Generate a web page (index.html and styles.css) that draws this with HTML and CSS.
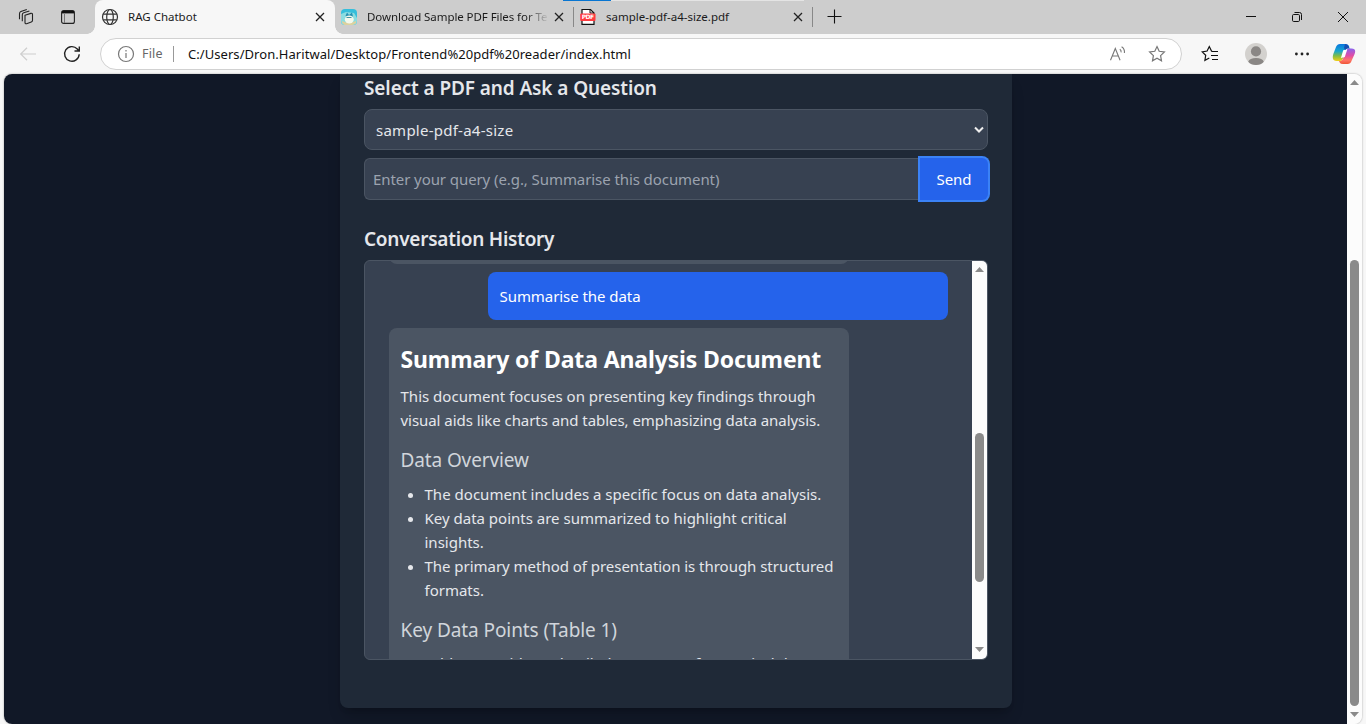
FILE: index.html
```html
<!DOCTYPE html>
<html lang="en">
<head>
<meta charset="utf-8">
<title>RAG Chatbot</title>
<link rel="stylesheet" href="styles.css">
</head>
<body>
<div class="browser">
  <header class="tabs">
    <div class="tab-tools">
      <svg class="workspaces" width="18" height="18" viewBox="0 0 18 18"><path d="M8 7.3 13.8 5.4q1.7-.4 1.7 1.1v5.8q0 1.3-1.2 1.7l-4.7 1.7q-1.6.4-1.6-1.1zM5.3 13.2V6.8q0-1.5 1.4-2L12.4 3M2.5 11.2V5.7q0-1.6 1.4-2.1L9.8 1.6"/></svg>
      <svg class="sidebar-icon" width="16" height="16" viewBox="0 0 16 16"><rect x="1.6" y="1.6" width="12.8" height="12.8" rx="2"/><path class="bar" d="M2 3.2h12"/><path class="rail" d="M4.5 5v9"/></svg>
    </div>
    <div class="tab active">
      <svg class="globe" width="18" height="18" viewBox="0 0 18 18"><circle cx="9" cy="9" r="7.5"/><ellipse cx="9" cy="9" rx="3.3" ry="7.5"/><path d="M2.2 6.2h13.6M2.2 11.8h13.6"/></svg>
      <span class="tab-title t1">RAG Chatbot</span>
      <svg class="x" width="10" height="10" viewBox="0 0 10 10"><path d="m1 1 8 8M9 1 1 9"/></svg>
    </div>
    <div class="tab second">
      <svg width="16" height="16" viewBox="0 0 16 16"><rect width="16" height="16" rx="4" fill="#35bedb"/><path d="M0 5v7q0 4 4 4h8q4 0 4-4V9l-3-5-8-1z" fill="#8bdce0"/><path d="M1 12q7 3 14 0v2q-2 2-4 2H4q-3-1-3-4z" fill="#ddd19e"/><path d="M4.5 7 6 3.5 8 6l3-2.5 1 4z" fill="#2690b3"/><ellipse cx="8.3" cy="10.5" rx="4.5" ry="4" fill="#f4f8ec"/><path d="M5.5 8.5h5" stroke="#4894a3"/></svg>
      <span class="tab-title t2">Download Sample PDF Files for Te</span>
      <svg class="x" width="10" height="10" viewBox="0 0 10 10"><path d="m1 1 8 8M9 1 1 9"/></svg>
    </div>
    <div class="tab third">
      <svg width="16" height="18" viewBox="0 0 16 18"><path d="M2 1.5h8.5L14 5v11.3H2z" fill="#fff" stroke="#111" stroke-width="1.2"/><path d="M10 1.5V5h4" fill="none" stroke="#111"/><rect x=".2" y="5.5" width="15.3" height="7.5" rx="1" fill="#ff3b3f"/><text x="1.8" y="11.4" class="pdf-label" textLength="12.2">PDF</text></svg>
      <span class="tab-title t3">sample-pdf-a4-size.pdf</span>
      <svg class="x" width="10" height="10" viewBox="0 0 10 10"><path d="m1 1 8 8M9 1 1 9"/></svg>
    </div>
    <svg class="plus" width="16" height="16" viewBox="0 0 16 16"><path d="M7.5 1.5v14M.5 8.5h14"/></svg>
    <div class="window-controls">
      <svg width="12" height="12" viewBox="0 0 12 12"><path d="M1 5.5h10"/></svg>
      <svg width="12" height="12" viewBox="0 0 12 12"><rect x="1.5" y="3.5" width="7" height="7" rx="1.2"/><path d="M3.5 1.5H8.5q2 0 2 2V9"/></svg>
      <svg width="12" height="12" viewBox="0 0 12 12"><path d="m1 1 10 10M11 1 1 11"/></svg>
    </div>
  </header>
  <nav class="toolbar">
    <svg class="back" width="18" height="16" viewBox="0 0 18 16"><path d="M17 8H2M8 1.8 1.7 8 8 14.2"/></svg>
    <svg class="reload" width="18" height="18" viewBox="0 0 18 18"><path d="M16.2 9.2A7.3 7.3 0 1 1 14.3 4L16 6M16.3 1.4V6h-4.8"/></svg>
    <div class="address">
      <svg class="info" width="18" height="18" viewBox="0 0 18 18"><circle cx="9" cy="9" r="7.5"/><path d="M9 8v5M9 5v1.4"/></svg>
      <span class="file">File</span>
      <span class="url">C:/Users/Dron.Haritwal/Desktop/Frontend%20pdf%20reader/index.html</span>
      <svg class="aloud" width="18" height="18" viewBox="0 0 18 18"><path d="m1.5 15.2 4.8-11.7 4.8 11.7M3.2 11h6.2M10.8 4.2q1.6 1 1.3 3.2M12.6 1.8q3.4 2.2 2.8 6.2"/></svg>
      <svg class="star" width="18" height="18" viewBox="0 0 18 18"><path d="m9 1.6 2.2 4.7 5.2.7-3.8 3.6.9 5.2L9 13.3l-4.5 2.5.9-5.2L1.6 7l5.2-.7z"/></svg>
    </div>
    <svg class="favorites" width="19" height="18" viewBox="0 0 19 18"><path d="M11.2 6.4 10.5 6 8.3 1.5 6.1 6l-4.9.8 3.5 3.5-.8 5 4.4-2.3M11 6.5h6M10 10.5h7M11 14.5h6"/></svg>
    <svg class="avatar" width="22" height="22" viewBox="0 0 22 22"><circle cx="11" cy="11" r="11" fill="#d3d1ce"/><circle cx="11" cy="8.4" r="5.1" fill="#8a8785"/><path d="M3.2 18.7q1.5-3.7 7.8-3.7t7.8 3.7Q16 22 11 22t-7.8-3.3" fill="#8a8785"/></svg>
    <svg class="dots" width="16" height="4" viewBox="0 0 16 4"><circle cx="2.4" cy="2" r="1.4"/><circle cx="8" cy="2" r="1.4"/><circle cx="13.6" cy="2" r="1.4"/></svg>
    <svg class="copilot" width="24" height="22" viewBox="0 0 24 22">
      <defs><linearGradient id="cool" x1="0" y1="0" x2="0" y2="1"><stop stop-color="#0876df"/><stop offset=".42" stop-color="#18a7cf"/><stop offset=".7" stop-color="#83bd45"/><stop offset="1" stop-color="#f2cf17"/></linearGradient><linearGradient id="warm" x1="0" y1="0" x2="0" y2="1"><stop stop-color="#8a63ee"/><stop offset=".45" stop-color="#df4da7"/><stop offset=".75" stop-color="#ff766a"/><stop offset="1" stop-color="#ef5535"/></linearGradient></defs>
      <path d="M13 1H8Q5.2 1 4 4L1.3 11q-2 7 3.4 7H8q2.2 0 3-2.5l3-9Q15 4 17.3 4L16.8 2.8Q16 1 13 1z" fill="url(#cool)"/><path d="M11 21h4.5q3 0 4-3L22.6 11q2-5.5-3.1-5.5h-2.6q-2.5 0-3.2 2.5l-2.5 7.2Q10.5 18 7 18l.7 1.5Q8.4 21 11 21z" fill="url(#warm)"/><path d="m11.2 7.2 4.1-1-2.5 7.8-3.9 1z" fill="#fff"/><path d="M13 1q3 0 4 3 .4 1.5 1.5 1.5H16q-2 0-3 1.5l-1-2z" fill="#164fb3"/>
    </svg>
  </nav>
  <div class="viewport">
    <main class="page">
      <section class="card">
        <h2 class="select-title">Select a PDF and Ask a Question</h2>
        <div class="select"><span>sample-pdf-a4-size</span><svg width="12" height="8" viewBox="0 0 12 8"><path d="m2 1.5 4 4 4-4"/></svg></div>
        <div class="query-row">
          <div class="query"><span>Enter your query (e.g., Summarise this document)</span></div>
          <button class="send"><span>Send</span></button>
        </div>
        <h2 class="history-title">Conversation History</h2>
        <div class="history">
          <div class="messages">
            <div class="previous"></div>
            <div class="message user"><span>Summarise the data</span></div>
            <article class="message reply">
              <h1>Summary of Data Analysis Document</h1>
              <p><span class="p1">This document focuses on presenting key findings through</span><br><span class="p2">visual aids like charts and tables, emphasizing data analysis.</span></p>
              <h3 class="overview">Data Overview</h3>
              <ul>
                <li><span class="l1">The document includes a specific focus on data analysis.</span></li>
                <li><span class="l2">Key data points are summarized to highlight critical</span><br><span class="l3">insights.</span></li>
                <li><span class="l4">The primary method of presentation is through structured</span><br><span class="l3">formats.</span></li>
              </ul>
              <h3 class="points">Key Data Points (Table 1)</h3>
              <ul class="clipped"><li><span class="l5">Table 1 provides a detailed summary of numerical data</span></li></ul>
            </article>
          </div>
          <div class="scrollbar inner"><svg width="9" height="6" viewBox="0 0 9 6"><path d="M4.5 0 9 5H0z"/></svg><i></i><svg width="9" height="6" viewBox="0 0 9 6"><path d="M0 0h9L4.5 5z"/></svg></div>
        </div>
      </section>
    </main>
    <div class="scrollbar outer"><svg width="9" height="6" viewBox="0 0 9 6"><path d="M4.5 0 9 5H0z"/></svg><i></i><svg width="9" height="6" viewBox="0 0 9 6"><path d="M0 0h9L4.5 5z"/></svg></div>
  </div>
</div>
</body>
</html>
```
FILE: styles.css
```css
* { box-sizing: border-box; }
body { margin: 0; overflow: hidden; font-family: "Noto Sans", sans-serif; font-size: 15px; line-height: 24px; }
h1, h2, h3, p, ul { margin: 0; }
svg { display: block; flex: none; fill: none; stroke: none; }
span { white-space: nowrap; }
.browser { width: 1366px; height: 724px; display: flex; flex-direction: column; background: #f7f7f7; overflow: hidden; }
.tabs { height: 34px; display: flex; flex: none; background: #cdcdcd; font-size: 11.5px; }
.tab-tools { width: 95px; padding: 0 0 0 17px; display: flex; align-items: center; gap: 25px; background: #cdcdcd; }
.workspaces, .sidebar-icon { stroke: #222; stroke-width: 1.1; }
.sidebar-icon .bar { stroke: #111; stroke-width: 2.4; }
.sidebar-icon .rail { stroke: #777; stroke-width: 1; }
.tab { display: flex; align-items: center; }
.active { position: relative; width: 240px; padding: 0 10px 0 6px; background: #f7f7f7; border-radius: 8px 8px 0 0; }
.active::before, .active::after { content: ""; position: absolute; bottom: 0; width: 8px; height: 8px; }
.active::before { left: -8px; background: radial-gradient(circle at 0 0, #cdcdcd 7.5px, #f7f7f7 8px); }
.active::after { right: -8px; background: radial-gradient(circle at 100% 0, #cdcdcd 7.5px, #f7f7f7 8px); }
.globe { stroke: #333; stroke-width: 1.2; }
.tab-title { color: #1b1b1b; line-height: 18px; }
.t1 { margin-left: 9px; }
.t2 { margin-left: 10px; width: 184px; letter-spacing: -.07px; overflow: hidden; -webkit-mask-image: linear-gradient(90deg, #000 158px, transparent 182px); mask-image: linear-gradient(90deg, #000 158px, transparent 182px); }
.t3 { margin-left: 10px; }
.x { margin-left: auto; stroke: #222; stroke-width: 1.3; }
.second { width: 238px; padding: 0 9px 0 6px; background: linear-gradient(#0875d1,#0875d1) 100% 0/10px 1px no-repeat; }
.third { width: 240px; padding: 0 10px 0 7px; background: linear-gradient(#0875d1,#0875d1) 0 0/38px 1px no-repeat, linear-gradient(#e4e4e4,#e4e4e4) 38px 0/193px 1px no-repeat, linear-gradient(#888,#888) 0 7px/1px 20px no-repeat, linear-gradient(#888,#888) 239px 7px/1px 20px no-repeat; }
.pdf-label { font: bold 6px "DejaVu Sans", sans-serif; fill: #fff; }
.plus { margin: 8px 0 0 14px; stroke: #111; stroke-width: 1.1; }
.window-controls { margin-left: auto; display: flex; align-items: center; gap: 34px; padding-right: 17px; stroke: #111; stroke-width: 1; }
.toolbar { height: 40px; flex: none; display: flex; align-items: center; padding: 0 10px 0 19px; }
.window-controls svg { stroke: #111; }
.back { stroke: #cecece; stroke-width: 1.2; }
.reload { margin-left: 26px; stroke: #222; stroke-width: 1.4; }
.address { margin-left: 19px; width: 1082px; flex: none; height: 32px; border: 1px solid #d1d1d1; border-radius: 16px; background: #fff; display: flex; align-items: center; padding: 0 15px 0 16px; }
.info { stroke: #777; stroke-width: 1.2; }
.file { margin-left: 7px; width: 32px; color: #666; font-size: 12.5px; line-height: 16px; letter-spacing: .2px; border-right: 1px solid #999; }
.url { margin-left: 14px; color: #111; font-size: 13px; letter-spacing: .055px; }
.aloud { margin-left: auto; stroke: #777; stroke-width: 1.1; }
.star { margin-left: 21px; stroke: #777; stroke-width: 1.2; }
.favorites { margin-left: 19px; stroke: #111; stroke-width: 1.2; }
.avatar { margin-left: 25px; }
.dots { margin-left: 27px; fill: #222; }
.copilot { margin-left: 22px; }
.viewport { height: 650px; width: 1358px; margin-left: 4px; display: flex; border-radius: 8px; overflow: hidden; background: #fcfcfc; box-shadow: 0 0 2px #999; }
.page { width: 1343px; display: flex; justify-content: center; background: #111827; }
.card { width: 672px; height: 634px; margin-left: 1px; padding: 0 24px; background: #1f2937; border-radius: 0 0 8px 8px; box-shadow: 0 10px 15px -3px rgba(0,0,0,.2), 0 4px 6px -4px rgba(0,0,0,.2); }
h2 { font-size: 19px; line-height: 28px; font-weight: 600; color: #e5e7eb; }
.select-title { letter-spacing: -.1px; }
.select { margin-top: 7px; height: 41px; display: flex; align-items: center; justify-content: space-between; padding: 0 2px 0 11px; color: #e5e7eb; background: #374151; border: 1px solid #4b5563; border-radius: 8px; letter-spacing: .25px; }
.select svg { stroke: #eee; stroke-width: 2; }
.query-row { display: flex; margin-top: 8px; }
.query { width: 556px; height: 42px; padding: 8px; color: #9ca3af; background: #374151; border: 1px solid #4b5563; border-right: 0; border-radius: 6px 0 0 6px; letter-spacing: -.08px; }
.send { width: 68px; height: 42px; border: 0; padding: 0; color: #fff; background: #2563eb; border-radius: 0 6px 6px 0; box-shadow: 0 0 0 2px #3b82f6; font: inherit; }
.history-title { margin-top: 25px; letter-spacing: -.25px; }
.history { height: 400px; margin-top: 7px; display: flex; border: 1px solid #4b5563; border-radius: 6px; overflow: hidden; background: #374151; }
.messages { width: 607px; padding: 0 24px; overflow: hidden; }
.previous { width: 460px; height: 20px; background: #4b5563; border-radius: 8px; margin: -17px 0 8px; }
.message { width: 460px; border-radius: 8px; padding: 12px 11.5px; color: #fff; }
.user { margin-left: auto; height: 48px; background: #2563eb; letter-spacing: -.06px; }
.reply { margin-top: 8px; height: 410px; background: #4b5563; color: #e5e7eb; }
.reply h1 { margin-top: 2px; font-size: 23px; line-height: 34px; color: #fff; font-weight: 700; letter-spacing: -.13px; }
.reply p { margin-top: 8px; }
.p1 { letter-spacing: .01px; }
.p2 { letter-spacing: -.05px; }
.l1 { letter-spacing: .02px; }
.l4 { letter-spacing: -.03px; }
.reply h3 { margin-top: 14px; font-size: 19px; line-height: 28px; font-weight: 400; color: #d1d5db; letter-spacing: -.12px; }
.reply .points { letter-spacing: -.08px; }
.reply ul { margin-top: 8px; padding-left: 24px; }
.reply .clipped { margin-top: 7px; }
.scrollbar { width: 15px; flex: none; display: flex; flex-direction: column; align-items: center; background: #fcfcfc; }
.scrollbar svg { fill: #8a8a8a; }
.scrollbar i { width: 9px; background: #8a8a8a; border-radius: 5px; }
.inner { padding-top: 6px; }
.inner i { height: 149px; margin: 160px 0 65px; }
.outer { padding-top: 6px; }
.outer i { height: 446px; margin: 174px 0 6px; }
```
